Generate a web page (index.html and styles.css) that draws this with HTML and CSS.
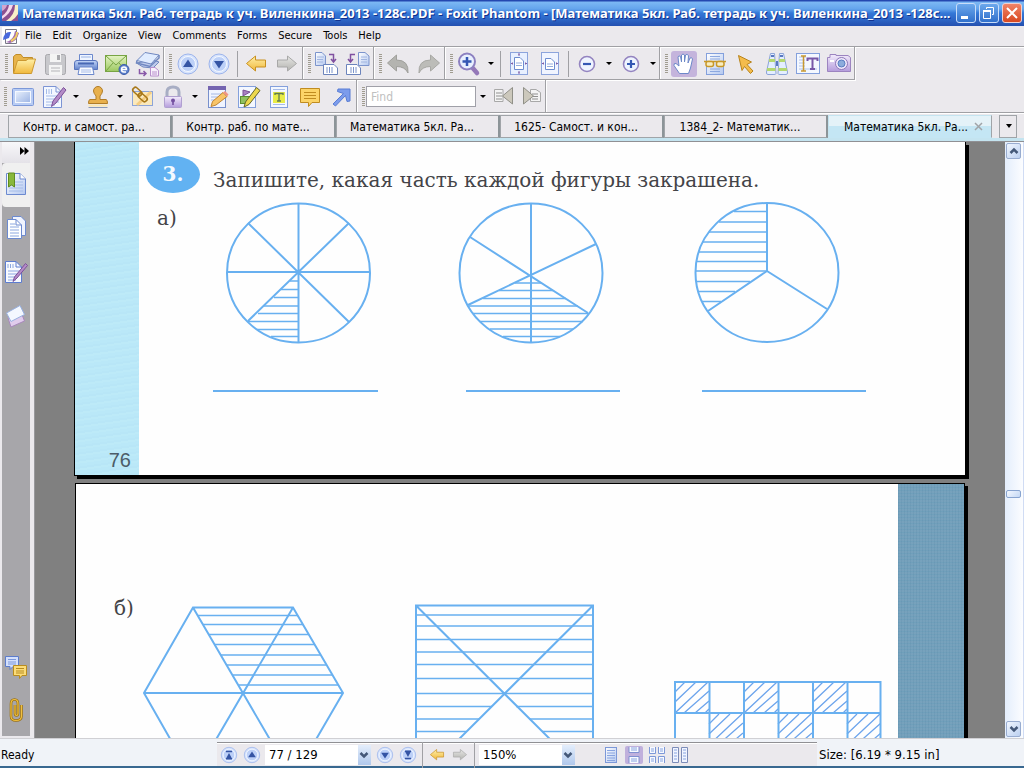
FILE: index.html
```html
<!DOCTYPE html>
<html lang="ru">
<head>
<meta charset="utf-8">
<title>Foxit Phantom</title>
<link rel="stylesheet" href="styles.css">
</head>
<body>
<svg class="defs" width="0" height="0" aria-hidden="true">
  <defs>
    <linearGradient id="gold" x1="0" y1="0" x2="0" y2="1"><stop offset="0" stop-color="#fff0a8"/><stop offset="1" stop-color="#f0b83c"/></linearGradient>
    <linearGradient id="blue" x1="0" y1="0" x2="1" y2="1"><stop offset="0" stop-color="#ffffff"/><stop offset="1" stop-color="#b4c8f0"/></linearGradient>
    <linearGradient id="deep" x1="0" y1="0" x2="0" y2="1"><stop offset="0" stop-color="#c4d6f8"/><stop offset="1" stop-color="#6484cc"/></linearGradient>
    <linearGradient id="screen" x1="0" y1="0" x2="1" y2="1"><stop offset="0" stop-color="#e8f0fc"/><stop offset="1" stop-color="#9cb4e4"/></linearGradient>
    <linearGradient id="gray" x1="0" y1="0" x2="0" y2="1"><stop offset="0" stop-color="#e6e6e4"/><stop offset="1" stop-color="#b4b4b0"/></linearGradient>
    <linearGradient id="lilac" x1="0" y1="0" x2="0" y2="1"><stop offset="0" stop-color="#f4ecfc"/><stop offset="1" stop-color="#b49cdc"/></linearGradient>
    <linearGradient id="green" x1="0" y1="0" x2="0" y2="1"><stop offset="0" stop-color="#e4f4c4"/><stop offset="1" stop-color="#9cc860"/></linearGradient>
    <symbol id="sheet" viewBox="0 0 26 26"><path d="M3.500 2.500H17L22.500 8V23.500H3.500Z" fill="url(#blue)" stroke="#6c8ad0"/><path d="M17 2.500V8H22.500" fill="#fff" stroke="#6c8ad0"/><path d="M6 11H20M6 14H20M6 17H20M6 20H20" stroke="#a4bce8"/></symbol>
    <symbol id="disc-up" viewBox="0 0 26 26"><circle cx="13" cy="13" r="10" fill="#d8e4fc" stroke="#9cb4ec"/><circle cx="13" cy="13" r="7.500" fill="#bcd0f8" stroke="#f4f8ff"/><path d="M8 16 13 8.500 18 16Z" fill="#3454a4"/></symbol>
    <symbol id="disc-first" viewBox="0 0 26 26"><circle cx="13" cy="13" r="10" fill="#d8e4fc" stroke="#9cb4ec"/><circle cx="13" cy="13" r="7.500" fill="#bcd0f8" stroke="#f4f8ff"/><path d="M9 8.500H17M9 18H17" stroke="#3454a4" stroke-width="2"/><path d="M9.500 17 13 10.500 16.500 17Z" fill="#3454a4"/></symbol>
    <symbol id="arrow-left" viewBox="0 0 26 26"><path d="M3.500 12.500 12.500 5V9H22.500V16H12.500V20Z" stroke-linejoin="round"/></symbol>
    <symbol id="bubble" viewBox="0 0 26 26"><path d="M3.500 4.500H22.500V18.500H15L11.500 22.500V18.500H3.500Z" stroke-linejoin="round"/><path d="M7 8.500H19M7 11.500H19M7 14.500H19" /></symbol>
    <symbol id="chevron" viewBox="0 0 12 12"><path d="M2.500 4 6 7.500 9.500 4" fill="none" stroke="#445878" stroke-width="2.500"/></symbol>
  </defs>
</svg>

<header class="titlebar">
  <svg class="app-icon" width="16" height="16" viewBox="0 0 16 16"><rect width="16" height="16" fill="#8c5090"/><path d="M0 11Q6 7 7 0H11Q9 8 0 14Z" fill="#f4d8ec"/><path d="M4 16Q13 10 13 0H16V9Q13 14 9 16Z" fill="#f8f0c8"/><path d="M0 0H5Q4 4 0 6Z" fill="#d4a4cc"/></svg>
  <h1 class="title">Математика 5кл. Раб. тетрадь к уч. Виленкина_2013 -128с.PDF - Foxit Phantom - [Математика 5кл. Раб. тетрадь к уч. Виленкина_2013 -128с...</h1>
  <div class="window-buttons">
    <button class="win" aria-label="Minimize"><svg width="18" height="18"><path d="M4 13.500H11" stroke="#fff" stroke-width="3"/></svg></button>
    <button class="win" aria-label="Restore"><svg width="18" height="18"><path d="M6.500 5V3.500H13.500V10.500H12" fill="none" stroke="#fff"/><path d="M3.500 7H10.500V14.500H3.500Z" fill="none" stroke="#fff"/><path d="M3 7H11" stroke="#fff" stroke-width="2"/></svg></button>
    <button class="win close" aria-label="Close"><svg width="18" height="18"><path d="M4 4 14 14M14 4 4 14" stroke="#fff" stroke-width="2"/></svg></button>
  </div>
</header>

<nav class="menubar">
  <svg width="18" height="18" viewBox="0 0 18 18"><path d="M3.500 2.500H14.500V16.500H3.500Z" fill="#fff" stroke="#787888"/><path d="M1 13Q2 4 9 5L7 11Z" fill="#4868dc"/><path d="M4 15Q12 13 13 4L17 6Q15 14 8 16Z" fill="#a06cb0"/><path d="M9 14Q15 11 15 5" fill="none" stroke="#f0d060" stroke-width="2"/></svg>
  <button>File</button><button>Edit</button><button>Organize</button><button>View</button><button>Comments</button><button>Forms</button><button>Secure</button><button>Tools</button><button>Help</button>
</nav>

<div class="toolbar">
  <div class="group">
    <span class="grip"></span>
    <button class="tool" aria-label="Open"><svg viewBox="0 0 26 26"><path d="M2.500 22V5.500L5 3.500H10L12 6.500H21.500V10" fill="#e8b44c" stroke="#c08c28"/><path d="M2.500 22.500 6.500 9.500H15L17 8H24.500L20.500 22.500Z" fill="url(#gold)" stroke="#cc9830"/></svg></button>
    <button class="tool" aria-label="Save"><svg viewBox="0 0 26 26"><rect x="3.500" y="3.500" width="20" height="20" rx="2" fill="#c8c8cc" stroke="#a8a8ac"/><rect x="8" y="3" width="11" height="8" fill="#f4f4f4"/><rect x="15" y="4" width="3" height="5" fill="#a8a8ac"/><rect x="7" y="14" width="13" height="10" fill="#f4f4f4"/><path d="M9 17H18M9 20H18" stroke="#b4b4b8"/></svg></button>
    <button class="tool" aria-label="Print"><svg viewBox="0 0 26 26"><path d="M6.500 11V3.500H19.500V11" fill="#eef4ff" stroke="#6c88cc"/><path d="M8 6H18" stroke="#9cb4e4"/><path d="M1.500 12Q1.500 9.500 4 9.500H22Q24.500 9.500 24.500 12V18.500H1.500Z" fill="url(#deep)" stroke="#5874bc"/><path d="M5 12.500H21" stroke="#4868b4" stroke-width="2"/><path d="M6.500 16H19.500L21 23.500H5Z" fill="#f8faff" stroke="#6c88cc"/><path d="M8 19H18M8 21H18" stroke="#a8bce8"/></svg></button>
    <button class="tool" aria-label="E-mail"><svg viewBox="0 0 26 26"><rect x="1.500" y="4.500" width="21" height="16" fill="url(#green)" stroke="#78a444"/><path d="M2 5 12 14 22 5M2 20 9 12M22 20 15 12" fill="none" stroke="#78a444"/><circle cx="20" cy="18.500" r="5" fill="#5c80cc" stroke="#3c5ca8"/><path d="M17.500 18.500H22.500Q22.500 16 20 16Q17.500 16 17.500 18.500Q17.500 21 20 21H22" fill="none" stroke="#fff" stroke-width="1.400"/></svg></button>
    <button class="tool" aria-label="Scan"><svg viewBox="0 0 26 26"><path d="M1.500 12 8 16 18 17 24 11 18 9Z" fill="#c0ccec" stroke="#7088c0"/><path d="M2 9.500 10 1.500 24 4 16 13Z" fill="#e0ecff" stroke="#7088c0"/><path d="M2 9.500 1.500 12 15 15.500 24 7V4" fill="none" stroke="#7088c0" stroke-width="1.500"/><path d="M4.500 18V22.500H11M8.500 20 11 22.500 8.500 25" fill="none" stroke="#8858a8" stroke-width="1.500"/><path d="M15.500 16.500H20L23.500 19.500V25H15.500Z" fill="#f8f0fc" stroke="#b890cc"/><path d="M17 21H22M17 23H22" stroke="#b890cc"/></svg></button>
  </div>
  <div class="group">
    <span class="grip"></span>
    <button class="tool" aria-label="Previous page"><svg><use href="#disc-up"/></svg></button>
    <button class="tool" aria-label="Next page"><svg class="flip"><use href="#disc-up"/></svg></button>
    <span class="divider"></span>
    <button class="tool" aria-label="Back"><svg class="arrow-gold"><use href="#arrow-left"/></svg></button>
    <button class="tool" aria-label="Forward"><svg class="arrow-gray"><use href="#arrow-left"/></svg></button>
  </div>
  <div class="group">
    <span class="grip"></span>
    <button class="tool" aria-label="Rotate right"><svg viewBox="0 0 26 26"><path d="M1.500 1.500H8L11.500 5V14.500H1.500Z" fill="url(#blue)" stroke="#7c94cc"/><path d="M3 6H10M3 8.500H9M3 11H9" stroke="#a0b4e0"/><path d="M15 3.500H19.500V10M17 8 19.500 11 22 8" fill="none" stroke="#8050a0" stroke-width="1.500"/><path d="M9.500 13.500H20L23.500 17V23.500H9.500Z" fill="#fff" stroke="#6c84bc"/><path d="M13 16V22M15.500 16V22M18 16V22" stroke="#7c94cc"/></svg></button>
    <button class="tool" aria-label="Rotate left"><svg viewBox="0 0 26 26"><path d="M13.500 1.500H20L24 5V14.500H13.500Z" fill="url(#blue)" stroke="#7c94cc"/><path d="M16 6H22M16 8.500H22M16 11H22" stroke="#a0b4e0"/><path d="M10 3.500H5.500V10M3 8 5.500 11 8 8" fill="none" stroke="#8050a0" stroke-width="1.500"/><path d="M1.500 13.500H12L15.500 17V23.500H1.500Z" fill="#fff" stroke="#6c84bc"/><path d="M6 16V22M8.500 16V22M11 16V22" stroke="#7c94cc"/></svg></button>
  </div>
  <div class="group">
    <span class="grip"></span>
    <button class="tool" aria-label="Undo"><svg viewBox="0 0 26 26"><path d="M2.500 12 11.500 4V9Q24 9 23 22Q20 15.500 11.500 15.500V20Z" fill="#b4b4b0" stroke="#a0a09c"/></svg></button>
    <button class="tool" aria-label="Redo"><svg viewBox="0 0 26 26"><path d="M23.500 12 14.500 4V9Q2 9 3 22Q6 15.500 14.500 15.500V20Z" fill="#bcbcb8" stroke="#a8a8a4"/></svg></button>
  </div>
  <div class="group">
    <span class="grip"></span>
    <button class="tool" aria-label="Zoom tool"><svg viewBox="0 0 26 26"><path d="M15 15 21 22" stroke="#9478b8" stroke-width="4.500" stroke-linecap="round"/><circle cx="11" cy="10.500" r="8" fill="#e8f0ff" stroke="#8c80c0" stroke-width="2"/><path d="M11 6V15M6.500 10.500H15.500" stroke="#3458b4" stroke-width="2.500"/></svg></button>
    <button class="caret" aria-label="Zoom options"></button>
    <span class="divider"></span>
    <button class="tool" aria-label="Fit page"><svg viewBox="0 0 26 26"><rect x="4.500" y="1.500" width="17" height="22" fill="#e8f0ff" stroke="#8ca4dc"/><path d="M8.500 6.500H14L17.500 10V18.500H8.500Z" fill="#fff" stroke="#6c8cd0"/><path d="M10 12H16M10 14.500H16" stroke="#94acdc"/><path d="M13 2V4M13 21V23M5 12.500H7M19 12.500H21M12 4H14M12 21H14M6.500 11.500V13.500M19.500 11.500V13.500" stroke="#8060a8"/></svg></button>
    <button class="tool" aria-label="Fit width"><svg viewBox="0 0 26 26"><rect x="4.500" y="1.500" width="17" height="22" fill="#f0f4ff" stroke="#8ca4dc"/><path d="M8.500 7.500H14L17.500 11V18.500H8.500Z" fill="#fff" stroke="#6c8cd0"/><path d="M10 13H16M10 15.500H16" stroke="#94acdc"/><path d="M5 12.500H7M19 12.500H21M6.500 11.500V13.500M19.500 11.500V13.500" stroke="#8060a8"/></svg></button>
    <span class="divider"></span>
    <button class="tool" aria-label="Zoom out"><svg viewBox="0 0 26 26"><circle cx="13" cy="13" r="7.500" fill="#eef4ff" stroke="#9484c0" stroke-width="1.600"/><path d="M9 13H17" stroke="#3458b4" stroke-width="2.200"/></svg></button>
    <button class="caret" aria-label="Zoom out options"></button>
    <button class="tool" aria-label="Zoom in"><svg viewBox="0 0 26 26"><circle cx="13" cy="13" r="7.500" fill="#eef4ff" stroke="#9484c0" stroke-width="1.600"/><path d="M9 13H17M13 9V17" stroke="#3458b4" stroke-width="2.200"/></svg></button>
    <button class="caret" aria-label="Zoom in options"></button>
  </div>
  <div class="group">
    <span class="grip"></span>
    <button class="tool active" aria-label="Hand"><svg viewBox="0 0 26 26"><path d="M8.500 22.500 3 14.500Q2.500 12 5 12.500L8 15 7 6Q7.500 4 9.500 5.500L10.500 11V4Q12 2 13.500 4V11L14.500 4Q16 2.500 17.500 4.500L17 12 19 7Q21 6 21.500 8L19.500 17 17.500 22.500Z" fill="#fff" stroke="#6c88c8"/></svg></button>
    <button class="tool" aria-label="Reading"><svg viewBox="0 0 26 26"><rect x="4.500" y="2.500" width="17" height="21" fill="url(#blue)" stroke="#84a0dc"/><path d="M8 5.500H18M8 8H18M8 18H18M8 20.500H18" stroke="#8ca8e0"/><path d="M2 10.500H24" stroke="#c89828" stroke-width="1.500"/><rect x="4" y="10.500" width="7.500" height="5" rx="2" fill="#f8ecc0" stroke="#c89828" stroke-width="1.500"/><rect x="14.500" y="10.500" width="7.500" height="5" rx="2" fill="#f8ecc0" stroke="#c89828" stroke-width="1.500"/></svg></button>
    <button class="tool" aria-label="Select annotation"><svg viewBox="0 0 26 26"><path d="M5.500 4.500 18.500 11 14 13.500 20 20 17.500 22.500 11.500 15.500 9 19.500Z" fill="#f4bc4c" stroke="#b8841c"/></svg></button>
    <button class="tool" aria-label="Find"><svg viewBox="0 0 26 26"><path d="M6.500 2.500H10.500L12 22.500Q12 23.500 10 23.500H4Q2 23.500 2.500 21Z" fill="#e4eeff" stroke="#8ca4d8"/><path d="M15.500 2.500H19.500L23.500 21Q24 23.500 22 23.500H16Q14 23.500 14 22.500Z" fill="#e4eeff" stroke="#8ca4d8"/><path d="M5 9.500H11M15 9.500H21M3 18.500H11.500M14.500 18.500H23" stroke="#b4d870" stroke-width="3"/><path d="M7 5H10M16 5H19M13 10V15" stroke="#5878c0" stroke-width="2"/></svg></button>
    <button class="tool" aria-label="Select text"><svg viewBox="0 0 26 26"><rect x="1.500" y="2.500" width="23" height="20" fill="#f4f8ff" stroke="#84a0dc"/><path d="M4 6H11M4 9H10M4 12H10M4 15H10M4 18H22" stroke="#b0c4ec"/><path d="M6 5H11M8.500 5V20M6 20H11" stroke="#c89830" stroke-width="1.500" fill="none"/><path d="M12.500 10V7.500H22.500V10M17.500 7.500V18M15 18H20" fill="none" stroke="#7858a8" stroke-width="2"/></svg></button>
    <button class="tool" aria-label="Snapshot"><svg viewBox="0 0 26 26"><path d="M1.500 6.500H4V3.500H10V4.500H22L24.500 6.500V20.500H1.500Z" fill="url(#lilac)" stroke="#9c84c0"/><circle cx="15.500" cy="12.500" r="6" fill="#f0e8fc" stroke="#8c78b8"/><circle cx="15.500" cy="12.500" r="3.500" fill="#8cacdc" stroke="#587cc0"/><rect x="4" y="9" width="4" height="2" fill="#fff"/></svg></button>
  </div>
</div>

<div class="toolbar second">
  <div class="group">
    <span class="grip"></span>
    <button class="tool" aria-label="Full screen"><svg viewBox="0 0 26 26"><rect x="2.500" y="4.500" width="21" height="17" rx="1" fill="#b8ccf4" stroke="#7c98d8"/><rect x="5.500" y="7.500" width="15" height="11" fill="url(#screen)" stroke="#f4f8ff"/></svg></button>
    <button class="tool" aria-label="Edit form"><svg viewBox="0 0 26 26"><path d="M2.500 2.500H15L20.500 8V23.500H2.500Z" fill="#f4f8ff" stroke="#7c94d4"/><path d="M15 2.500V8H20.500" fill="none" stroke="#7c94d4"/><path d="M5 12H18M5 15H18M5 18H18M5 21H14" stroke="#a4bce8"/><path d="M5.500 5V10M8 5V10M10.500 5V10" stroke="#a4bce8"/><path d="M10.500 22.500 12 17 22.500 3.500 25 6 15 19Z" fill="#b48cc8" stroke="#7c5098"/></svg></button>
    <button class="caret" aria-label="Form options"></button>
    <button class="tool" aria-label="Stamp"><svg viewBox="0 0 26 26"><path d="M8.500 7A4.500 4.500 0 1 1 17.500 7Q17.500 9 15 12V15.500H21Q22.500 15.500 22.500 19.500H3.500Q3.500 15.500 5 15.500H11V12Q8.500 9 8.500 7Z" fill="#e8b04c" stroke="#b07c28"/><path d="M3.500 21.500H22.500" stroke="#fce8b0" stroke-width="2"/><path d="M3.500 23.500H22.500" stroke="#8898b8"/></svg></button>
    <button class="caret" aria-label="Stamp options"></button>
    <button class="tool" aria-label="Link"><svg viewBox="0 0 26 26"><rect x="3.500" y="7.500" width="20" height="14" fill="#fbe9bc" stroke="#8ca4d8"/><path d="M8 21 22 8" stroke="#f4cc80" stroke-width="3"/><rect x="3" y="5" width="10" height="5" rx="2" transform="rotate(42 8 8)" fill="none" stroke="#a87818" stroke-width="1.600"/><rect x="9" y="11" width="10" height="5" rx="2" transform="rotate(42 14 13)" fill="none" stroke="#a87818" stroke-width="1.600"/></svg></button>
    <button class="tool" aria-label="Security"><svg viewBox="0 0 26 26"><path d="M7 13V8Q7 3 13 3Q19 3 19 8V13" fill="none" stroke="#a8aec4" stroke-width="3"/><rect x="4.500" y="12.500" width="17" height="11" rx="1" fill="url(#lilac)" stroke="#b0a0d0"/><circle cx="13" cy="16.500" r="2" fill="#7450a0"/><path d="M13 16V21" stroke="#7450a0" stroke-width="1.600"/></svg></button>
    <button class="caret" aria-label="Security options"></button>
    <button class="tool" aria-label="Note"><svg viewBox="0 0 26 26"><rect x="4.500" y="2.500" width="17" height="21" fill="#f0f4ff" stroke="#7890cc"/><rect x="4" y="2" width="18" height="4" fill="#7464b0"/><path d="M7 10H19M7 13H19M7 16H15" stroke="#a4b8e4"/><path d="M7 22.500 8.500 17.500 19 8.500 23 12.500 12 21Z" fill="#f8c468" stroke="#c08430"/><path d="M19 8.500 21 7 24.500 10.500 23 12.500Z" fill="#f09484"/></svg></button>
    <button class="tool" aria-label="Drawing"><svg viewBox="0 0 26 26"><rect x="3.500" y="2.500" width="17" height="21" fill="#f4f8ff" stroke="#84a0dc"/><path d="M8 6V12L15 8Z" fill="#a880c0" stroke="#7c5098"/><rect x="5.500" y="12.500" width="9" height="7" fill="#90c060" stroke="#5c9030"/><path d="M9 23 10.500 18 21.500 3.500 25 6.500 14 20.500Z" fill="#ecd84c" stroke="#64642c"/></svg></button>
    <button class="tool" aria-label="Highlight text"><svg viewBox="0 0 26 26"><rect x="4.500" y="2.500" width="17" height="21" fill="#f4f8ff" stroke="#84a0dc"/><path d="M7 5.500H19M7 20.500H19" stroke="#a8bce8"/><rect x="7" y="8" width="12" height="11" fill="#e8ec48"/><path d="M9 11V9.500H17V11M13 9.500V17M11 17H15" fill="none" stroke="#607c50" stroke-width="1.300"/></svg></button>
    <button class="tool" aria-label="Comment"><svg class="bubble-gold"><use href="#bubble"/></svg></button>
    <button class="tool" aria-label="Arrow"><svg viewBox="0 0 26 26"><path d="M5 20 15.500 9.500 9.500 7.500 10 5H22V17L19 17.500 17.500 11.500 7.500 22Z" fill="#7c9cec" stroke="#587cd4"/></svg></button>
  </div>
  <div class="group find">
    <span class="grip"></span>
    <input type="text" placeholder="Find" aria-label="Find">
    <button class="caret" aria-label="Find options"></button>
    <button class="tool narrow" aria-label="Find previous"><svg viewBox="0 0 26 26"><path d="M4.500 5.500H13V17.500H4.500Z" fill="#f4f4f4" stroke="#a8a8a8"/><path d="M6 9H12M6 12H12M6 15H12" stroke="#909090"/><path d="M22.500 3.500V20L12.500 12Z" fill="#ccc8bc" stroke="#909088"/></svg></button>
    <button class="tool narrow" aria-label="Find next"><svg viewBox="0 0 26 26"><path d="M12.500 5.500H18L22.500 8.500V17.500H12.500Z" fill="#f4f4f4" stroke="#a8a8a8"/><path d="M14 10H20M14 12.500H20M14 15H20" stroke="#909090"/><path d="M5.500 3.500V20L15.500 12Z" fill="#ccc8bc" stroke="#909088"/></svg></button>
  </div>
</div>

<div class="tabs">
  <button class="tab">Контр. и самост. ра...</button>
  <button class="tab">Контр. раб. по мате...</button>
  <button class="tab">Математика 5кл. Ра...</button>
  <button class="tab">1625- Самост. и кон...</button>
  <button class="tab">1384_2- Математик...</button>
  <button class="tab current"><span>Математика 5кл. Ра...</span><svg width="9" height="9"><path d="M1 1 8 8M8 1 1 8" stroke="#a0a4a8" stroke-width="1.500"/></svg></button>
  <button class="tab-list" aria-label="List tabs"><svg width="7" height="5"><path d="M1 0H7L4 4Z"/></svg></button>
</div>

<main class="workspace">
  <aside class="sidebar">
    <div class="rail">
      <button class="expand" aria-label="Expand"><svg width="9" height="8"><path d="M0 0 4.500 4 0 8ZM4.500 0 9 4 4.500 8Z"/></svg></button>
      <button class="panel current" aria-label="Bookmarks"><svg viewBox="0 0 26 26"><use href="#sheet"/><path d="M5.500 2H11.500V16L8.500 14 5.500 16Z" fill="#88b83c" stroke="#608c20"/></svg></button>
      <button class="panel" aria-label="Pages"><svg viewBox="0 0 26 26"><path d="M9.500 1.500H18L22.500 6V20.500H9.500Z" fill="#f0f4ff" stroke="#6c8ad0"/><path d="M4.500 4.500H13L18.500 10V23.500H4.500Z" fill="#fff" stroke="#6c8ad0"/><path d="M13 4.500V10H18.500" fill="none" stroke="#6c8ad0"/><path d="M7 9H12M7 12H16M7 15H16M7 18H16M7 21H16" stroke="#8ca8e0"/></svg></button>
      <button class="panel" aria-label="Signatures"><svg viewBox="0 0 26 26"><path d="M2.500 2.500H13L18.500 8V23.500H2.500Z" fill="#f8faff" stroke="#5c7cd0"/><path d="M13 2.500V8H18.500" fill="none" stroke="#5c7cd0"/><path d="M5 5V9M7.500 5V9M10 5V9M5 12H16M5 15H16M5 18H13M5 21H13" stroke="#8ca8e0"/><path d="M10 22.500 11.500 18 22.500 4.500 24.500 6.500 14 19Z" fill="#b48cc8" stroke="#7c5098"/></svg></button>
      <button class="panel" aria-label="Layers"><svg viewBox="0 0 26 26"><path d="M5 15 18 9 21.500 18 8 24Z" fill="#e0ccec" stroke="#a888bc" stroke-linejoin="round"/><path d="M3.500 10 17 2.500 21.500 11.500 8 18.500Z" fill="#f4f8ff" stroke="#98b0e0" stroke-linejoin="round"/></svg></button>
      <span class="spacer"></span>
      <button class="panel" aria-label="Comments"><svg viewBox="0 0 26 26"><path d="M2.500 3.500H15.500V13.500H10L7 16.500V13.500H2.500Z" fill="#d4e0fc" stroke="#5c7ccc"/><path d="M5 6.500H13M5 9H13M5 11H13" stroke="#7c98dc"/><path d="M10.500 12.500H23.500V22.500H19L16.500 25.500V22.500H10.500Z" fill="#fcdc78" stroke="#b88c20"/><path d="M13 15.500H21M13 18H21M13 20H21" stroke="#b88c20"/></svg></button>
      <button class="panel" aria-label="Attachments"><svg viewBox="0 0 26 26"><path d="M12 8V16.500Q12 18.500 13.500 18.500Q15 18.500 15 16.500V7Q15 2.500 11.500 2.500Q8 2.500 8 7V19Q8 23.500 13 23.500Q18.500 23.500 18.500 19V8" fill="none" stroke="#9c7010" stroke-width="2.600"/><path d="M12 8V16.500Q12 18.500 13.500 18.500Q15 18.500 15 16.500V7Q15 2.500 11.500 2.500Q8 2.500 8 7V19Q8 23.500 13 23.500Q18.500 23.500 18.500 19V8" fill="none" stroke="#f0c040" stroke-width="1.200"/></svg></button>
    </div>
  </aside>

  <div class="document">
    <article class="page left-page">
      <div class="margin"><span class="folio">76</span></div>
      <div class="sheet">
        <header class="task"><span class="number">3.</span><h2>Запишите, какая часть каждой фигуры закрашена.</h2></header>
        <div class="exercise">
          <span class="label">а)</span>
          <div class="figures">
            <svg width="176" height="196" viewBox="212 200 176 196">
              <ellipse cx="298.500" cy="273" rx="71.500" ry="69.500"/>
              <path d="M298.500 203V343M227 272H370M248 223 349 322M349 223 248 321"/>
              <path class="thin" d="M290 281H298M281 289.500H298M274 297.500H298M264 306H298M258 313.500H298M248 321.500H298M257 329.500H298M271 336.500H298"/>
              <path d="M213 391H378"/>
            </svg>
            <svg width="176" height="196" viewBox="452 200 176 196">
              <ellipse cx="531" cy="273" rx="71.500" ry="69.500"/>
              <path d="M531 203V343M470 237 588 313M596 244 468 305"/>
              <path class="thin" d="M515 283H542M499 290.500H553M483 298.500H566M469 306H578M473 313.500H588M480 321.500H583M490 329H573M503 336.500H560"/>
              <path d="M466 391H620"/>
            </svg>
            <svg width="176" height="196" viewBox="692 200 176 196">
              <ellipse cx="767" cy="272.500" rx="71.500" ry="69.500"/>
              <path d="M767 203V271L827 309M767 271 708 311"/>
              <path class="thin" d="M734 211.500H767M719 222H767M709 232H767M702 242H767M698 252H767M696 261.500H767M695 271H767M696 281.500H750M698 291.500H735M702 301.500H721"/>
              <path d="M702 391H866"/>
            </svg>
          </div>
        </div>
      </div>
    </article>

    <article class="page right-page">
      <div class="sheet">
        <div class="exercise">
          <span class="label">б)</span>
          <div class="figures">
            <svg width="208" height="200" viewBox="140 600 208 200">
              <path d="M193 607.500H293L343 693 293 779H193L144 693ZM144 693H343M193 607.500 293 779M293 607.500 193 779"/>
              <path class="thin" d="M198 615.500H298M203 624.500H303M209 634.500H309M215 644.500H315M221 655H321M227 665H327M233 675H333M239 685H338"/>
            </svg>
            <svg width="195" height="200" viewBox="412 600 195 200">
              <path d="M416 605.500H593V782H416ZM416 605.500 593 782M593 605.500 416 782"/>
              <path class="thin" d="M416 615H593M416 626H593M416 639.500H593M416 652H593M416 664.500H593M416 678.500H593M416 693.500H593M416 706.500H492M516 706.500H593M416 719H479M529 719H593M416 731.500H466M542 731.500H593"/>
            </svg>
            <svg width="213" height="200" viewBox="671 600 213 200">
              <defs><pattern id="hatch" width="69" height="64" patternUnits="userSpaceOnUse" x="675" y="682"><path d="M0 10 10 0M0 20 21 0M0 31 33 0M9 31 34 9M20 31 34 19M30 31 34 27M34 42 44 32M34 52 55 32M34 63 67 32M43 63 68 41M54 63 68 51" stroke="#6ca4ec" stroke-width="1.300" fill="none"/></pattern></defs>
              <rect class="hatched" x="675" y="682" width="206" height="63"/>
              <path d="M675 682H880.500V776H675ZM675 713H881M675 745H881M709.500 682V776M744 682V776M778.500 682V776M813 682V776M847.500 682V776"/>
            </svg>
          </div>
        </div>
      </div>
      <div class="margin"></div>
    </article>
  </div>

  <div class="scrollbar">
    <button aria-label="Scroll up"><svg class="flip" width="12" height="12"><use href="#chevron"/></svg></button>
    <span class="track"><span class="thumb"></span></span>
    <button aria-label="Scroll down"><svg width="12" height="12"><use href="#chevron"/></svg></button>
  </div>
</main>

<footer class="status">
  <span class="ready">Ready</span>
  <div class="pager">
    <button class="mini" aria-label="First page"><svg class="disc"><use href="#disc-first"/></svg></button>
    <button class="mini" aria-label="Previous page"><svg class="disc"><use href="#disc-up"/></svg></button>
    <span class="combo page-combo"><select aria-label="Page"><option>77 / 129</option></select><span class="drop"><svg width="12" height="12"><use href="#chevron"/></svg></span></span>
    <button class="mini" aria-label="Next page"><svg class="disc flip"><use href="#disc-up"/></svg></button>
    <button class="mini" aria-label="Last page"><svg class="disc flip"><use href="#disc-first"/></svg></button>
    <span class="divider"></span>
    <button class="mini" aria-label="Back"><svg class="arrow-gold"><use href="#arrow-left"/></svg></button>
    <button class="mini" aria-label="Forward"><svg class="arrow-gray"><use href="#arrow-left"/></svg></button>
    <span class="divider"></span>
    <span class="combo zoom-combo"><select aria-label="Zoom"><option>150%</option></select><span class="drop"><svg width="12" height="12"><use href="#chevron"/></svg></span></span>
    <span class="views">
      <button class="mini" aria-label="Single page"><svg viewBox="0 0 18 18"><rect x="3.500" y="1.500" width="11" height="15" fill="url(#blue)" stroke="#7c98d8"/><path d="M5 4.500H13M5 7H13M5 9.500H13M5 12H13M5 14.500H13" stroke="#88a4e0"/></svg></button>
      <button class="mini active" aria-label="Continuous"><svg viewBox="0 0 18 18"><path d="M4 1V6.500H14V1M4 17V10.500H14V17" fill="#f8faff" stroke="#8090d0"/><path d="M6 2H12M6 4H12M6 13H12M6 15H12" stroke="#88a4e0"/></svg></button>
      <button class="mini" aria-label="Continuous facing"><svg viewBox="0 0 18 18"><path d="M1.500 1V7.500H7.500V1M10.500 1V7.500H16.500V1M1.500 17V10.500H7.500V17M10.500 17V10.500H16.500V17" fill="#f8faff" stroke="#7c98d8"/><path d="M3 3H6M3 5H6M12 3H15M12 5H15M3 13H6M3 15H6M12 13H15M12 15H15" stroke="#88a4e0"/></svg></button>
      <button class="mini" aria-label="Facing"><svg viewBox="0 0 18 18"><path d="M1.500 1.500H7.500V16.500H1.500ZM10.500 1.500H16.500V16.500H10.500Z" fill="#f0f4ff" stroke="#7c8cb8"/><path d="M3 4H6M3 7H6M3 10H6M3 13H6M12 4H15M12 7H15M12 10H15M12 13H15" stroke="#88a4e0"/></svg></button>
    </span>
  </div>
  <span class="size">Size: [6.19 * 9.15 in]</span>
</footer>
</body>
</html>
```

FILE: styles.css
```css
* { box-sizing: border-box; }
html, body { height: 100%; }
body {
  margin: 0;
  display: flex;
  flex-direction: column;
  overflow: hidden;
  background: #ebe9ed;
  color: #000;
  font: 11px/14px "DejaVu Sans Condensed", "DejaVu Sans", sans-serif;
}
button, input, select { font: inherit; color: inherit; margin: 0; }
button { border: 0; padding: 0; background: none; display: flex; align-items: center; justify-content: center; }
svg { display: block; flex: none; }
.defs { position: absolute; }
.flip { transform: scaleY(-1); }

.titlebar {
  display: flex;
  align-items: center;
  height: 26px;
  flex: none;
  padding: 0 2px;
  background: linear-gradient(#2448b0 0, #2448b0 1px, #7cb8f4 2px, #64a4ec 9px, #3478d8 13px, #2c64c4 20px, #2450b0 26px);
}
.title {
  margin: 0 0 0 4px;
  flex: 1;
  min-width: 0;
  overflow: hidden;
  white-space: nowrap;
  color: #fff;
  font: bold 13px/20px "Noto Sans", "DejaVu Sans Condensed", sans-serif;
  text-shadow: 1px 1px 0 #10308c;
}
.window-buttons { display: flex; gap: 3px; }
.win { width: 20px; height: 20px; border: 1px solid #c8dcf8; border-radius: 3px; background: linear-gradient(#6ca8ec, #3070cc); }
.win.close { border-color: #f0d0d0; background: linear-gradient(#f08468, #d84820); }

.menubar { display: flex; align-items: center; height: 20px; flex: none; gap: 11px; padding-left: 2px; }
.menubar svg { margin-right: -6px; background: #fff; }

.toolbar { display: flex; height: 34px; flex: none; border-top: 1px solid #a0a0a4; box-shadow: inset 0 1px 0 #fff; }
.toolbar.second { height: 32px; border: 0; box-shadow: none; }
.group { display: flex; align-items: center; padding: 1px 0 0 5px; border-right: 1px solid #a0a0a4; border-bottom: 1px solid #a0a0a4; box-shadow: 1px 1px 0 #fff; }
.second .group { border-bottom: 0; box-shadow: 1px 0 0 #fff; }
.second .group:first-child { padding-left: 4px; }
.grip { width: 3px; height: 20px; background: repeating-linear-gradient(#a09c90 0 1px, #ebe9ed 1px 2px); }
.tool { width: 31px; height: 28px; }
.tool svg { width: 26px; height: 26px; }
.tool.narrow { width: 28px; }
.tool.active svg { background: #c4b4dc; border-radius: 3px; }
.caret { width: 13px; height: 24px; }
.caret::before { content: ""; border: 3px solid transparent; border-top-color: #000; border-bottom: 0; }
.divider { width: 1px; height: 26px; margin: 0 2px 0 3px; background: #a0a0a4; }
.arrow-gold { fill: url(#gold); stroke: #c89020; }
.arrow-gray { fill: url(#gray); stroke: #a8a8a8; transform: scaleX(-1); }
.bubble-gold { fill: #fcd468; stroke: #c08c20; }
.find input { width: 110px; height: 21px; margin-left: 1px; padding: 0 4px; border: 1px solid #a0a0a8; background: #fff; font-size: 12px; }
.find input::placeholder { color: #c0c0c0; opacity: 1; }

.tabs { display: flex; flex: none; height: 29px; padding: 2px 7px 3px 8px; border-top: 1px solid #a0a0a4; box-shadow: inset 0 1px 0 #fff, inset 0 -3px 0 #c4e4f0; }
.tab { flex: 0 1 164px; min-width: 0; padding-right: 11px; border: 1px solid #a0a4a8; border-right: 2px solid #8c9498; font-size: 12px; white-space: nowrap; }
.tab.current { justify-content: flex-end; gap: 6px; padding-right: 8px; background: linear-gradient(#e4f2f8 50%, #c4e6f4 50%); border-color: #c4e4f0 #a0a4a8 #c4e6f4 #c4e4f0; border-width: 1px; }
.tab-list { width: 18px; margin-left: auto; border: 1px solid #a0a4a8; }

.workspace { flex: 1; min-height: 0; display: flex; border-top: 1px solid #909094; border-bottom: 1px solid #d0d0d4; }
.sidebar { width: 35px; flex: none; display: flex; padding: 0 4px 2px 2px; border-right: 1px solid #98989c; }
.rail { flex: 1; display: flex; flex-direction: column; padding-bottom: 3px; background: #a7a6aa; }
.expand { height: 21px; flex: none; justify-content: flex-end; padding: 0 1px 4px 0; background: linear-gradient(#f8f8fa, #e4e2e8); }
.panel { height: 44px; flex: none; padding-bottom: 3px; }
.panel.current { background: #f0f0f0; border-radius: 4px 0 0 4px; }
.panel svg { width: 26px; height: 26px; }
.spacer { flex: 1; }

.document { flex: 1; min-width: 0; overflow: hidden; background: #808080; }
.page { display: flex; margin: 0 auto 7px; border: 1px solid #000; background: #fefefe; box-shadow: 3px 3px 0 #000; }
.left-page { max-width: 892px; height: 334px; border-top: 0; }
.right-page { max-width: 890px; height: 420px; }
.margin { flex: none; }
.left-page .margin {
  width: 64px;
  display: flex;
  align-items: flex-end;
  justify-content: flex-end;
  padding: 0 8px 3px 0;
  background: repeating-linear-gradient(172deg, #b8e6f7 0 2px, #bdeaf8 2px 4px, #bae8f8 4px 7px);
}
.folio { font: 20px/24px "Liberation Sans Narrow", "Liberation Sans", sans-serif; color: #4c5c68; }
.right-page .margin { width: 66px; background: repeating-linear-gradient(90deg, #5888a820 0 1px, #88b4cc20 1px 3px), repeating-linear-gradient(#6c9cb8 0 1px, #749fba 1px 3px); }
.sheet { flex: 1; min-width: 0; }
.task { display: flex; align-items: flex-start; gap: 13px; height: 58px; padding: 14px 0 0 7px; }
.number { width: 54px; height: 37px; flex: none; border-radius: 50%; background: #62b2f2; color: #f4faff; font: bold 20px/36px "DejaVu Serif", serif; text-align: center; }
.task h2 { margin: 0; color: #444448; font: 20px/48px "DejaVu Serif", serif; white-space: nowrap; }
.exercise { display: flex; color: #444448; font: 20px/24px "DejaVu Serif", serif; }
.label { flex: none; }
.left-page .label { width: 73px; padding: 6px 0 0 18px; }
.right-page .label { width: 64px; padding-left: 38px; }
.right-page .exercise { padding-top: 116px; }
.right-page .label { margin-top: -4px; }
.figures { display: flex; gap: 64px; }
.figures svg { fill: none; stroke: #68b0f0; stroke-width: 2px; }
.figures .thin { stroke-width: 1.5px; }
.figures .hatched { fill: url(#hatch); stroke: none; }

.scrollbar { width: 19px; flex: none; display: flex; flex-direction: column; padding: 1px 2px 1px 1px; background: linear-gradient(90deg, #e4eefc, #fcfdff); border-right: 1px solid #d0dcf4; }
.scrollbar button { height: 16px; flex: none; border: 1px solid #98acd0; border-radius: 2px; background: linear-gradient(135deg, #f0f6ff, #bcd0f0); }
.track { flex: 1; display: flex; flex-direction: column; padding-top: 331px; }
.thumb { height: 8px; border: 1px solid #88a4d0; border-radius: 2px; background: linear-gradient(135deg, #f4f8ff, #c4d8f4); }

.status { display: flex; flex: none; height: 29px; padding-top: 3px; background: #f0f3f8; border-bottom: 2px solid #386890; font-size: 12px; }
.ready { width: 217px; padding: 6px 1px; }
.pager { flex: 1; min-width: 0; display: flex; align-items: center; border-top: 1px solid #909094; background: #ebe9ed; box-shadow: inset 0 1px 0 #fff; }
.mini { width: 23px; height: 22px; }
.mini svg { width: 18px; height: 18px; }
.mini .disc { width: 20px; height: 20px; }
.mini.active svg { background: #c0b0dc; border-radius: 2px; }
.combo { display: flex; height: 20px; background: #fff; margin: 0 2px; }
.page-combo { width: 106px; }
.zoom-combo { width: 96px; }
.combo select { flex: 1; min-width: 0; appearance: none; border: 0; padding: 0 4px; background: none; font-size: 13px; }
.drop { width: 13px; display: flex; align-items: center; background: linear-gradient(#e4eefc, #b0c8ec); }
.views { display: flex; margin-left: 22px; }
.size { width: 207px; padding: 6px 2px; font-size: 13px; white-space: nowrap; }
```
